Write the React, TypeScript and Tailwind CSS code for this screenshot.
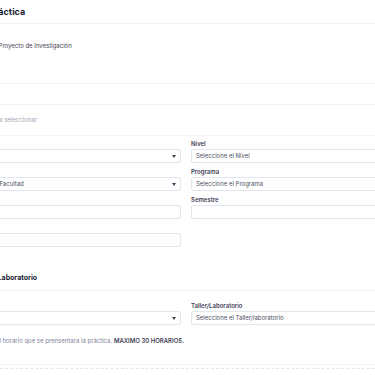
import { ReactNode } from "react";

type FieldProps = {
  label?: string;
  value?: string;
  select?: boolean;
};

function Caret() {
  return (
    <svg width="4" height="3" viewBox="0 0 4 3" className="shrink-0" aria-hidden="true">
      <path d="M0 0h4L2 3z" fill="#3f4254" />
    </svg>
  );
}

function Field({ label, value, select }: FieldProps) {
  return (
    <div className="flex flex-col">
      <span className="h-[8px] text-[6px] leading-[8px] font-semibold text-[#3f4254]">
        {label}
      </span>
      <div className="mt-[1px] flex h-[14px] items-center justify-between rounded-[2px] border border-[#e4e6ef] bg-white pl-[4px] pr-[4px] text-[6px] leading-[8px] text-[#4b5060]">
        <span className="truncate">{value}</span>
        {select && <Caret />}
      </div>
    </div>
  );
}

function Grid({ children, className = "" }: { children: ReactNode; className?: string }) {
  return (
    <div className={`grid grid-cols-[226px_226px] gap-x-[10px] gap-y-[5px] ${className}`}>
      {children}
    </div>
  );
}

export default function App() {
  return (
    <div
      className="h-[375px] w-[375px] overflow-hidden bg-white text-[#5e6278]"
      style={{ fontFamily: "Inter, 'Noto Sans', sans-serif" }}>
      <div className="-ml-[45px] w-[500px]">
        <div className="flex h-[24px] items-center border-b border-[#eff2f5]">
          <h3 className="-ml-[1px] text-[9px] leading-[10px] font-bold text-[#181c32]">
            Tipo de Práctica
          </h3>
        </div>

        <div className="h-[60px] border-b border-[#eff2f5] pt-[18px]">
          <p className="ml-[10px] text-[6px] leading-[8px] text-[#3f4254]">
            Práctica en Proyecto de Investigación
          </p>
        </div>

        <div className="h-[21px] border-b border-[#eff2f5]" />

        <div className="h-[31px] border-b border-[#f3f4f7] pt-[11px]">
          <p className="-ml-[20px] text-[6px] leading-[8px] text-[#a1a5b7]">
            Seleccione la práctica a seleccionar
          </p>
        </div>

        <Grid className="pt-[4px]">
          <Field label="Sede" value="Seleccione la" select />
          <Field label="Nivel" value="Seleccione el Nivel" />
          <Field label="Facultad" value="Seleccione la Facultad" select />
          <Field label="Programa" value="Seleccione el Programa" />
          <Field label="Asignatura" />
          <Field label="Semestre" />
          <Field label="Grupo" />
        </Grid>

        <div className="border-b border-[#eff2f5] pt-[26px] pb-[7px]">
          <h4 className="ml-[16px] text-[7px] leading-[10px] font-bold text-[#181c32]">
            Taller o Laboratorio
          </h4>
        </div>

        <Grid className="pt-[11px]">
          <Field label="Sede" value="Seleccione" select />
          <Field label="Taller/Laboratorio" value="Seleccione el Taller/laboratorio" />
        </Grid>

        <p className="mt-[12px] ml-[8px] text-[6px] leading-[8px] text-[#7e8299]">
          Seleccione el horario que se prensentara la práctica.{" "}
          <span className="font-semibold text-[#3f4254]">MAXIMO 30 HORARIOS.</span>
        </p>

        <div className="mt-[19px] border-t border-[#eff2f5]" />
        <div className="mt-[3px] border-t border-dashed border-[#e4e6ef]" />
      </div>
    </div>
  );
}
